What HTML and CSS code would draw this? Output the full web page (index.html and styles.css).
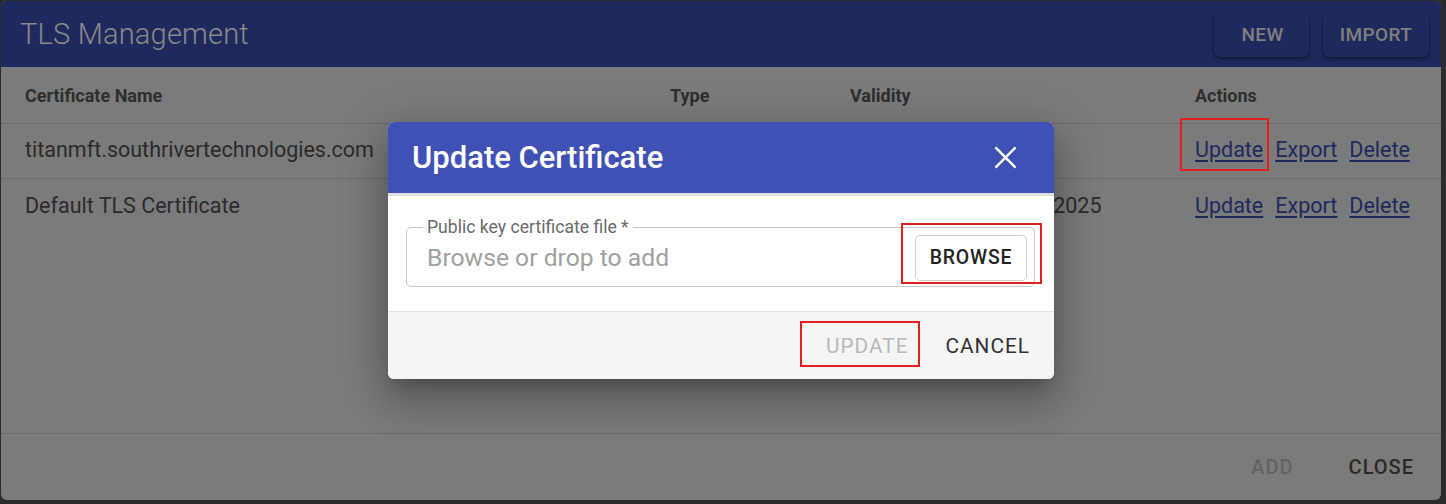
FILE: index.html
```html
<!DOCTYPE html>
<html lang="en">
<head>
<meta charset="utf-8">
<title>TLS Management</title>
<link rel="stylesheet" href="styles.css">
</head>
<body>
<div class="dialog">
  <header class="dlg-head">
    <h1 class="dlg-title">TLS Management</h1>
    <div class="head-actions">
      <button class="head-btn btn-new">NEW</button>
      <button class="head-btn btn-import">IMPORT</button>
    </div>
  </header>
  <div class="dlg-body">
    <div class="trow thead">
      <div class="cell">Certificate Name</div>
      <div class="cell">Type</div>
      <div class="cell">Validity</div>
      <div class="cell">Actions</div>
    </div>
    <div class="trow">
      <div class="cell">titanmft.southrivertechnologies.com</div>
      <div class="cell">Custom</div>
      <div class="cell">Jun 10, 2024</div>
      <div class="cell actions">
        <a href="#" class="lnk marked">Update</a>
        <a href="#" class="lnk">Export</a>
        <a href="#" class="lnk">Delete</a>
      </div>
    </div>
    <div class="trow last">
      <div class="cell">Default TLS Certificate</div>
      <div class="cell">Self-signed</div>
      <div class="cell">Jan 1, 2024 - Dec 31, 2025</div>
      <div class="cell actions">
        <a href="#" class="lnk">Update</a>
        <a href="#" class="lnk">Export</a>
        <a href="#" class="lnk">Delete</a>
      </div>
    </div>
  </div>
  <footer class="dlg-foot">
    <button class="txt-btn disabled">ADD</button>
    <button class="txt-btn close">CLOSE</button>
  </footer>

  <div class="overlay">
    <div class="modal">
      <div class="modal-head">
        <h2 class="modal-title">Update Certificate</h2>
        <button class="modal-x" aria-label="close">
          <svg width="24" height="24" viewBox="0 0 24 24"><path d="M1.5 1.5 22.5 22.5M22.5 1.5 1.5 22.5" stroke="#fff" stroke-width="2.6" fill="none"/></svg>
        </button>
      </div>
      <div class="modal-body">
        <fieldset class="file-field">
          <legend class="file-legend">Public key certificate file *</legend>
          <div class="file-row">
            <span class="placeholder">Browse or drop to add</span>
            <button class="browse-btn">BROWSE</button>
          </div>
        </fieldset>
      </div>
      <div class="modal-foot">
        <button class="m-btn m-update">UPDATE</button>
        <button class="m-btn m-cancel">CANCEL</button>
      </div>
    </div>
  </div>
</div>
</body>
</html>
```

FILE: styles.css
```css
* { box-sizing: border-box; }
html, body { margin: 0; padding: 0; }
body {
  background: #2b2b2b;
  width: 1446px;
  height: 504px;
  overflow: hidden;
  font-family: Roboto, "Liberation Sans", sans-serif;
  padding: 1px 0 0 1px;
}
button { font-family: inherit; cursor: pointer; }

.dialog {
  position: relative;
  width: 1440px;
  height: 499px;
  border-radius: 6px;
  overflow: hidden;
  background: #7b7b7b;
  display: flex;
  flex-direction: column;
}

.dlg-head {
  height: 66px;
  background: #1f295c;
  display: flex;
  align-items: center;
  justify-content: space-between;
  padding: 0 12px 0 19px;
}
.dlg-title {
  margin: 0;
  font-size: 29px;
  font-weight: 300;
  color: #8a8a8a;
  letter-spacing: 0.2px;
}
.head-actions { display: flex; gap: 14px; margin-top: 1px; }
.head-btn {
  height: 45px;
  border: none;
  border-radius: 6px;
  background: #1f295c;
  color: #7f7f7f;
  font-size: 19px;
  font-weight: 500;
  letter-spacing: 0.4px;
  box-shadow: 0 2px 4px rgba(0,0,0,0.35), 0 1px 2px rgba(0,0,0,0.25);
}
.btn-new { width: 95px; padding-right: 4px; }
.btn-import { width: 106px; }

.dlg-body { flex: 1; }
.trow {
  display: grid;
  grid-template-columns: 645px 180px 345px 1fr;
  padding-left: 24px;
  padding-bottom: 3px;
  height: 55px;
  align-items: center;
  border-bottom: 1px solid #6b6b6b;
  font-size: 21.5px;
  color: #2a2a2a;
}
.trow.last { border-bottom: none; }
.thead {
  height: 57px;
  font-size: 18px;
  font-weight: 700;
  color: #2e2e2e;
  padding-top: 0;
  padding-bottom: 0;
}
.actions { display: flex; gap: 12px; }
.lnk { color: #1f295c; text-decoration: underline; text-underline-offset: 3px; }
.marked { position: relative; }
.marked::after {
  content: "";
  position: absolute;
  left: -15px;
  right: -6px;
  top: -19px;
  bottom: -9px;
  border: 2px solid #e02020;
}

.dlg-foot {
  height: 67px;
  border-top: 1px solid #6b6b6b;
  display: flex;
  justify-content: flex-end;
  align-items: center;
  gap: 31px;
  padding-right: 15px;
}
.txt-btn {
  background: none;
  border: none;
  font-size: 20px;
  font-weight: 500;
  letter-spacing: 1px;
  padding: 8px 12px;
}
.txt-btn.disabled { color: #626262; }
.txt-btn.close { color: #2a2a2a; }

.overlay {
  position: absolute;
  inset: 0;
  display: flex;
  align-items: center;
  justify-content: center;
}
.modal {
  width: 666px;
  height: 257px;
  background: #fff;
  border-radius: 6px;
  overflow: hidden;
  display: flex;
  flex-direction: column;
  box-shadow: 0 11px 15px -7px rgba(0,0,0,0.22), 0 24px 38px 3px rgba(0,0,0,0.16), 0 9px 46px 8px rgba(0,0,0,0.14);
}
.modal-head {
  height: 74px;
  background: #3f51b5;
  border-bottom: 3px solid #e0e0e0;
  display: flex;
  align-items: center;
  justify-content: space-between;
  padding: 0 37px 0 24px;
}
.modal-title {
  margin: 0;
  color: #fff;
  font-size: 31px;
  font-weight: 500;
}
.modal-x {
  background: none;
  border: none;
  padding: 0;
  width: 23px;
  height: 23px;
  display: flex;
  align-items: center;
  justify-content: center;
}
.modal-x svg { width: 23px; height: 23px; }

.modal-body {
  height: 115px;
  padding: 21px 19px 0 18px;
}
.file-field {
  margin: 0;
  padding: 0 7px 0 0;
  border: 1px solid #c8c8c8;
  border-radius: 5px;
}
.file-legend {
  margin-left: 16px;
  padding: 0 4px;
  font-size: 17.6px;
  line-height: 20px;
  color: #6a6a6a;
}
.file-row {
  height: 58px;
  margin-top: -9px;
  display: flex;
  align-items: center;
  justify-content: space-between;
  padding-left: 20px;
}
.placeholder { font-size: 24.7px; color: #a0a0a0; }
.browse-btn {
  position: relative;
  width: 112px;
  height: 46px;
  margin-top: 1px;
  background: #fff;
  border: 1px solid #cfcfcf;
  border-radius: 5px;
  font-size: 19.4px;
  font-weight: 500;
  letter-spacing: 0.8px;
  color: #222;
}
.browse-btn::after {
  content: "";
  position: absolute;
  left: -15px;
  right: -16px;
  top: -13px;
  bottom: -4px;
  border: 2px solid #e02020;
}

.modal-foot {
  flex: 1;
  background: #f5f5f5;
  border-top: 1px solid #e0e0e0;
  display: flex;
  justify-content: flex-end;
  align-items: center;
  gap: 21px;
  padding: 0 16px 0 0;
}
.m-btn {
  background: none;
  border: none;
  font-size: 20.8px;
  line-height: 24px;
  font-weight: 400;
  letter-spacing: 1px;
  padding: 8px;
}
.m-update { color: #b8b8b8; position: relative; }
.m-update::after {
  content: "";
  position: absolute;
  left: -18px;
  right: -3px;
  top: -5px;
  bottom: -1px;
  border: 2px solid #e02020;
}
.m-cancel { color: #333; }
```
